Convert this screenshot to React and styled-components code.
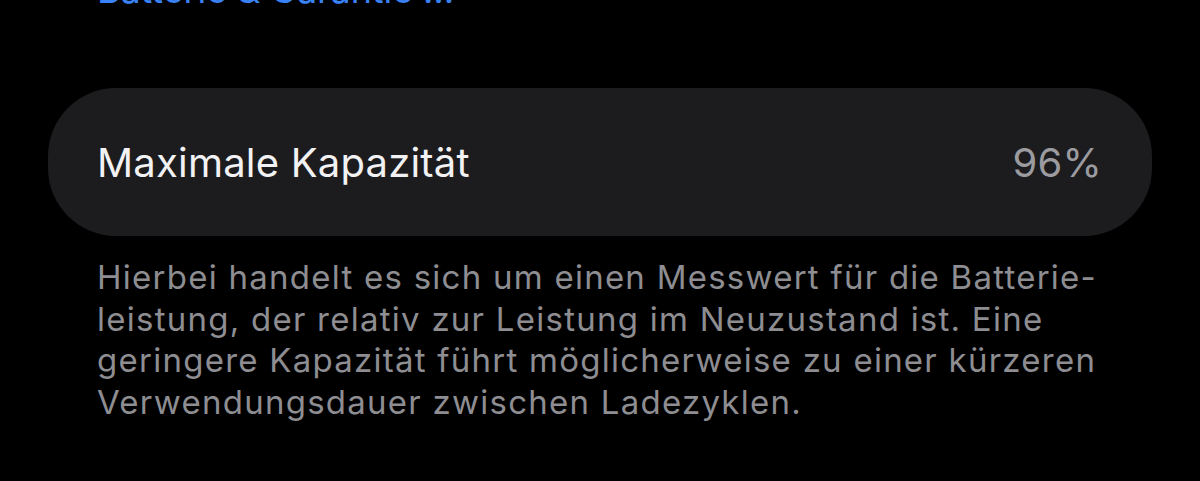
import styled, { createGlobalStyle } from "styled-components";

const GlobalStyle = createGlobalStyle`
  html, body {
    margin: 0;
    padding: 0;
    background: #000;
  }
  body {
    font-family: Inter, "Noto Sans", "Liberation Sans", sans-serif;
    -webkit-font-smoothing: antialiased;
  }
`;

const Page = styled.div`
  width: 1200px;
  height: 481px;
  overflow: hidden;
  background: #000;
  padding: 0 48px;
  box-sizing: border-box;
`;

const Link = styled.div`
  margin-top: -33px;
  padding-left: 49px;
  font-size: 36px;
  line-height: 46px;
  letter-spacing: -0.1px;
  color: #3a82f7;
  white-space: nowrap;
`;

const Card = styled.div`
  margin-top: 75px;
  height: 148px;
  border-radius: 68px;
  background: #1c1c1e;
  display: flex;
  align-items: center;
  justify-content: space-between;
  padding: 0 50px 0 49px;
`;

const Label = styled.span`
  font-size: 40px;
  color: #f2f2f4;
  letter-spacing: 0.2px;
`;

const Value = styled.span`
  font-size: 40px;
  color: #9b9ba0;
  letter-spacing: 0.2px;
`;

const Footnote = styled.p`
  margin: 21px 0 0;
  padding: 0 0 0 49px;
  font-size: 33px;
  line-height: 41.5px;
  letter-spacing: 1.25px;
  color: #8d8d92;
  white-space: nowrap;
`;

const App = () => {
  return (
    <Page>
      <GlobalStyle />
      <Link>Batterie &amp; Garantie …</Link>
      <Card>
        <Label>Maximale Kapazität</Label>
        <Value>96%</Value>
      </Card>
      <Footnote>
        Hierbei handelt es sich um einen Messwert für die Batterie-
        <br />
        leistung, der relativ zur Leistung im Neuzustand ist. Eine
        <br />
        geringere Kapazität führt möglicherweise zu einer kürzeren
        <br />
        Verwendungsdauer zwischen Ladezyklen.
      </Footnote>
    </Page>
  );
};

export default App;
